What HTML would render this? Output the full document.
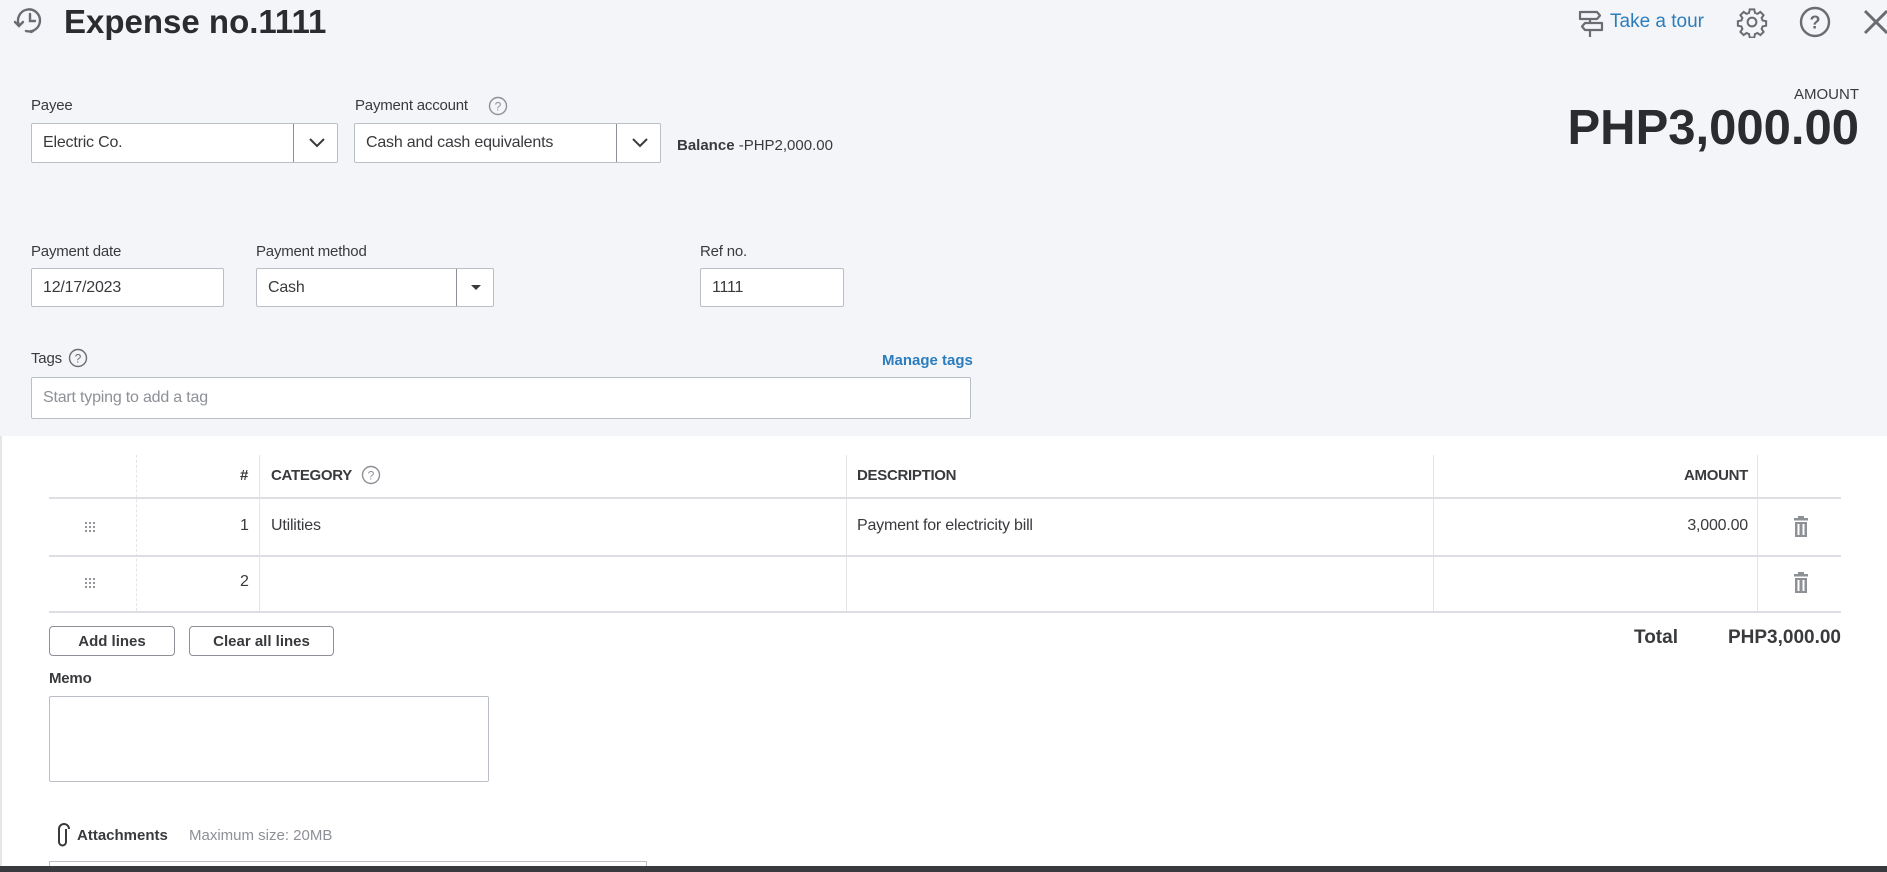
<!DOCTYPE html>
<html><head><meta charset="utf-8"><style>
*{box-sizing:border-box;margin:0;padding:0}
body{width:1887px;height:872px;overflow:hidden;background:#fff;font-family:"Liberation Sans",sans-serif;color:#393a3d;position:relative}
.a{position:absolute}
.top{left:0;top:0;width:1887px;height:436px;background:#f4f5f8}
.lbl{font-size:15px;color:#393a3d;letter-spacing:-0.2px}
.inp{background:#fff;border:1px solid #babec5;border-radius:2px;font-size:16px;color:#393a3d;padding-left:11px;display:flex;align-items:center;letter-spacing:-0.2px}
.dd{position:absolute;top:0;bottom:0;border-left:1px solid #8d9096}
.vl{position:absolute;top:455px;height:156px;border-left:1px solid #e3e5e8}
.hl{position:absolute;left:49px;width:1792px;height:2px;background:#dcdee2}
.th{position:absolute;top:467px;font-size:15px;font-weight:bold;color:#393a3d;letter-spacing:-0.3px}
.td{position:absolute;font-size:16px;color:#393a3d;letter-spacing:-0.2px}
.btn{position:absolute;top:626px;height:30px;border:1px solid #8d9096;border-radius:4px;background:#fff;font-size:15px;font-weight:bold;display:flex;align-items:center;justify-content:center;color:#393a3d}
.dots{position:absolute;width:12px;height:12px;background-image:radial-gradient(circle,#8d9096 1px,transparent 1.3px);background-size:4px 4px}
.r{position:absolute;text-align:right;white-space:nowrap}
</style></head><body>
<div class="a top"></div>

<svg class="a" style="left:13px;top:6px" width="34" height="30" viewBox="0 0 34 30"><g fill="none" stroke="#6b6c72" stroke-width="2.4" stroke-linecap="round"><path d="M6 19 A11 11 0 1 1 13 25"/><path d="M2 16 L6 20 L10 16"/><path d="M17 8 V15 H22"/><path d="M18 26 l2-1"/></g></svg>
<div class="a" style="left:64px;top:3px;font-size:33px;font-weight:bold;color:#2b2c2f;letter-spacing:0px">Expense no.1111</div>

<svg class="a" style="left:1577px;top:9px" width="28" height="30" viewBox="0 0 28 30"><g fill="none" stroke="#6b6c72" stroke-width="2.2" stroke-linejoin="round"><path d="M3 3 H20 L23 6.5 L20 10 H3 Z"/><path d="M25 14 H8 L5 17.5 L8 21 H25 Z"/><path d="M13 10 V14 M13 21 V28"/></g></svg>
<div class="a" style="left:1610px;top:11px;font-size:19px;color:#2b7dbd">Take a tour</div>
<svg class="a" style="left:1736px;top:6px" width="32" height="32" viewBox="0 0 24 24"><g fill="none" stroke="#6b6c72" stroke-width="1.5"><circle cx="12" cy="12" r="3.3"/><path d="M10.3 2.5h3.4l.5 2.6 1.9.8 2.2-1.5 2.4 2.4-1.5 2.2.8 1.9 2.6.5v3.4l-2.6.5-.8 1.9 1.5 2.2-2.4 2.4-2.2-1.5-1.9.8-.5 2.6h-3.4l-.5-2.6-1.9-.8-2.2 1.5-2.4-2.4 1.5-2.2-.8-1.9-2.6-.5v-3.4l2.6-.5.8-1.9-1.5-2.2 2.4-2.4 2.2 1.5 1.9-.8z"/></g></svg>
<svg class="a" style="left:1799px;top:6px" width="32" height="32" viewBox="0 0 32 32"><circle cx="16" cy="16" r="14" fill="none" stroke="#6b6c72" stroke-width="2.4"/><text x="16" y="22.5" text-anchor="middle" font-family="Liberation Sans" font-size="18" font-weight="bold" fill="#6b6c72">?</text></svg>
<svg class="a" style="left:1862px;top:8px" width="25" height="28" viewBox="0 0 25 28"><path d="M3 3 L25 25 M25 3 L3 25" stroke="#6b6c72" stroke-width="3"/></svg>

<div class="r" style="right:28px;top:86px;font-size:15px;color:#393a3d">AMOUNT</div>
<div class="r" style="right:28px;top:100px;font-size:49px;font-weight:bold;color:#2b2c2f;letter-spacing:0px">PHP3,000.00</div>

<div class="a lbl" style="left:31px;top:97px">Payee</div>
<div class="a inp" style="left:31px;top:123px;width:307px;height:40px">Electric Co.<div class="dd" style="left:261px;width:46px"><svg width="46" height="38" viewBox="0 0 46 38"><path d="M16 15 L23 22 L30 15" fill="none" stroke="#393a3d" stroke-width="2"/></svg></div></div>
<div class="a lbl" style="left:355px;top:97px">Payment account</div>
<svg class="a" style="left:488px;top:96px" width="20" height="20" viewBox="0 0 20 20"><circle cx="10" cy="10" r="8.5" fill="none" stroke="#8d9096" stroke-width="1.4"/><text x="10" y="14.5" text-anchor="middle" font-family="Liberation Sans" font-size="12" fill="#8d9096">?</text></svg>
<div class="a inp" style="left:354px;top:123px;width:307px;height:40px">Cash and cash equivalents<div class="dd" style="left:261px;width:46px"><svg width="46" height="38" viewBox="0 0 46 38"><path d="M16 15 L23 22 L30 15" fill="none" stroke="#393a3d" stroke-width="2"/></svg></div></div>
<div class="a" style="left:677px;top:137px;font-size:15px"><b>Balance</b> -PHP2,000.00</div>

<div class="a lbl" style="left:31px;top:243px">Payment date</div>
<div class="a inp" style="left:31px;top:268px;width:193px;height:39px">12/17/2023</div>
<div class="a lbl" style="left:256px;top:243px">Payment method</div>
<div class="a inp" style="left:256px;top:268px;width:238px;height:39px">Cash<div class="dd" style="left:199px;width:38px"><svg width="38" height="37" viewBox="0 0 38 37"><path d="M14 16 L24 16 L19 21 Z" fill="#393a3d"/></svg></div></div>
<div class="a lbl" style="left:700px;top:243px">Ref no.</div>
<div class="a inp" style="left:700px;top:268px;width:144px;height:39px">1111</div>

<div class="a lbl" style="left:31px;top:350px">Tags</div>
<svg class="a" style="left:68px;top:348px" width="20" height="20" viewBox="0 0 20 20"><circle cx="10" cy="10" r="8.5" fill="none" stroke="#6b6c72" stroke-width="1.4"/><text x="10" y="14.5" text-anchor="middle" font-family="Liberation Sans" font-size="12" fill="#6b6c72">?</text></svg>
<div class="a" style="left:882px;top:352px;font-size:15px;font-weight:bold;color:#2b7dbd">Manage tags</div>
<div class="a inp" style="left:31px;top:377px;width:940px;height:42px;color:#8d9096">Start typing to add a tag</div>

<div class="vl" style="left:136px;border-left-style:dashed"></div>
<div class="vl" style="left:259px"></div>
<div class="vl" style="left:846px"></div>
<div class="vl" style="left:1433px"></div>
<div class="vl" style="left:1757px"></div>
<div class="hl" style="top:497px"></div>
<div class="hl" style="top:555px"></div>
<div class="hl" style="top:611px"></div>
<div class="th" style="left:240px">#</div>
<div class="th" style="left:271px">CATEGORY</div>
<svg class="a" style="left:361px;top:465px" width="20" height="20" viewBox="0 0 20 20"><circle cx="10" cy="10" r="8.5" fill="none" stroke="#8d9096" stroke-width="1.4"/><text x="10" y="14.5" text-anchor="middle" font-family="Liberation Sans" font-size="12" fill="#8d9096">?</text></svg>
<div class="th" style="left:857px">DESCRIPTION</div>
<div class="r th" style="right:139px">AMOUNT</div>

<div class="dots" style="left:84px;top:521px"></div>
<div class="td" style="left:240px;top:517px">1</div>
<div class="td" style="left:271px;top:517px">Utilities</div>
<div class="td" style="left:857px;top:517px">Payment for electricity bill</div>
<div class="r td" style="right:139px;top:517px">3,000.00</div>
<div class="dots" style="left:84px;top:577px"></div>
<div class="td" style="left:240px;top:573px">2</div>
<svg class="a" style="left:1793px;top:516px" width="16" height="22" viewBox="0 0 16 22"><g fill="#8d9096"><rect x="5" y="0" width="6" height="2"/><rect x="1" y="2" width="14" height="2.5"/><path d="M2 6h12v15H2z M4.5 8v11h2V8z M9.5 8v11h2V8z" fill-rule="evenodd"/></g></svg>
<svg class="a" style="left:1793px;top:572px" width="16" height="22" viewBox="0 0 16 22"><g fill="#8d9096"><rect x="5" y="0" width="6" height="2"/><rect x="1" y="2" width="14" height="2.5"/><path d="M2 6h12v15H2z M4.5 8v11h2V8z M9.5 8v11h2V8z" fill-rule="evenodd"/></g></svg>

<div class="btn" style="left:49px;width:126px">Add lines</div>
<div class="btn" style="left:189px;width:145px">Clear all lines</div>
<div class="a" style="left:1634px;top:627px;font-size:19px;font-weight:bold">Total</div>
<div class="r" style="right:46px;top:627px;font-size:19px;font-weight:bold;letter-spacing:0px">PHP3,000.00</div>

<div class="a lbl" style="left:49px;top:670px;font-weight:bold">Memo</div>
<div class="a" style="left:49px;top:696px;width:440px;height:86px;border:1px solid #babec5;border-radius:2px"></div>

<svg class="a" style="left:56px;top:822px" width="16" height="26" viewBox="0 0 16 26"><path d="M11 6 V19 A3.5 3.5 0 0 1 4 19 V6 A5 5 0 0 1 14 6" fill="none" stroke="#393a3d" stroke-width="2" transform="translate(-1,1)"/></svg>
<div class="a" style="left:77px;top:827px;font-size:15px;font-weight:bold">Attachments</div>
<div class="a" style="left:189px;top:827px;font-size:15px;color:#8d9096">Maximum size: 20MB</div>
<div class="a" style="left:49px;top:861px;width:598px;height:10px;border:1px solid #babec5;border-bottom:none"></div>
<div class="a" style="left:0;top:866px;width:1887px;height:6px;background:#393a3d"></div>
<div class="a" style="left:0;top:436px;width:2px;height:430px;background:#e3e5e8"></div>
</body></html>
